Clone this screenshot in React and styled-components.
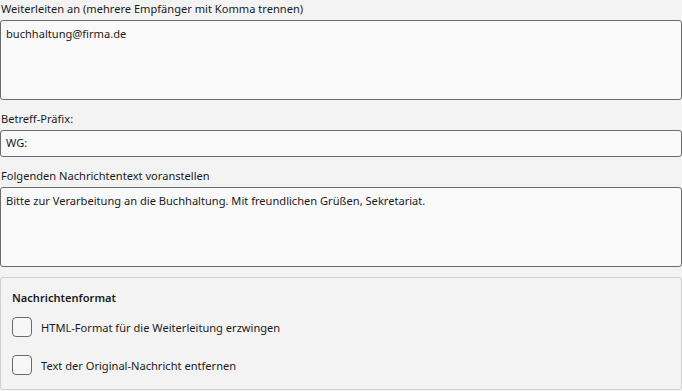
import React from 'react';
import styled, { createGlobalStyle } from 'styled-components';

const GlobalStyle = createGlobalStyle`
    html, body {
        margin: 0;
        padding: 0;
        background: #f3f3f3;
    }
    body {
        font-family: "Segoe UI", "Noto Sans", sans-serif;
        font-size: 11.1px;
        color: #1b1b1b;
    }
`;

const Page = styled.div`
    width: 682px;
    height: 391px;
    box-sizing: border-box;
    display: flex;
    flex-direction: column;
    overflow: hidden;
`;

const Field = styled.div`
    display: flex;
    flex-direction: column;
    margin-bottom: 10px;
`;

const Label = styled.label`
    height: 20px;
    line-height: 18px;
    padding-left: 1px;
    color: #1b1b1b;
`;

const TextBox = styled.textarea`
    box-sizing: border-box;
    width: 100%;
    height: ${p => p.$rows === 1 ? '27px' : '80px'};
    margin: 0;
    padding: ${p => p.$rows === 1 ? '4px 5px' : '5px 5px'};
    border: 1px solid #6b6b6b;
    border-radius: 3px;
    background: #f9f9f9;
    font-family: inherit;
    font-size: 11.1px;
    line-height: 16px;
    color: #1b1b1b;
    resize: none;
    overflow: hidden;
    outline: none;
`;

const Group = styled.fieldset`
    box-sizing: border-box;
    margin: 0;
    width: 100%;
    height: 113px;
    padding: 10px 11px 15px;
    border: 1px solid #d0d0d0;
    border-radius: 3px;
    background: #f3f3f3;
    display: flex;
    flex-direction: column;
`;

const GroupTitle = styled.div`
    font-weight: 600;
    line-height: 20px;
    margin-bottom: 9px;
`;

const CheckList = styled.div`
    display: flex;
    flex-direction: column;
    gap: 18px;
`;

const CheckRow = styled.label`
    display: flex;
    align-items: center;
    gap: 9px;
    height: 20px;
`;

const Box = styled.span`
    box-sizing: border-box;
    width: 20px;
    height: 20px;
    border: 1px solid #6b6b6b;
    border-radius: 4px;
    background: #f7f7f7;
    flex: none;
`;

const App = () => {
  return (
    <Page>
      <GlobalStyle />
      <Field>
        <Label>Weiterleiten an (mehrere Empfänger mit Komma trennen)</Label>
        <TextBox defaultValue="buchhaltung@firma.de" />
      </Field>
      <Field>
        <Label>Betreff-Präfix:</Label>
        <TextBox $rows={1} defaultValue="WG:" />
      </Field>
      <Field>
        <Label>Folgenden Nachrichtentext voranstellen</Label>
        <TextBox defaultValue="Bitte zur Verarbeitung an die Buchhaltung. Mit freundlichen Grüßen, Sekretariat." />
      </Field>
      <Group>
        <GroupTitle>Nachrichtenformat</GroupTitle>
        <CheckList>
          <CheckRow><Box />HTML-Format für die Weiterleitung erzwingen</CheckRow>
          <CheckRow><Box />Text der Original-Nachricht entfernen</CheckRow>
        </CheckList>
      </Group>
    </Page>
  );
}

export default App;
